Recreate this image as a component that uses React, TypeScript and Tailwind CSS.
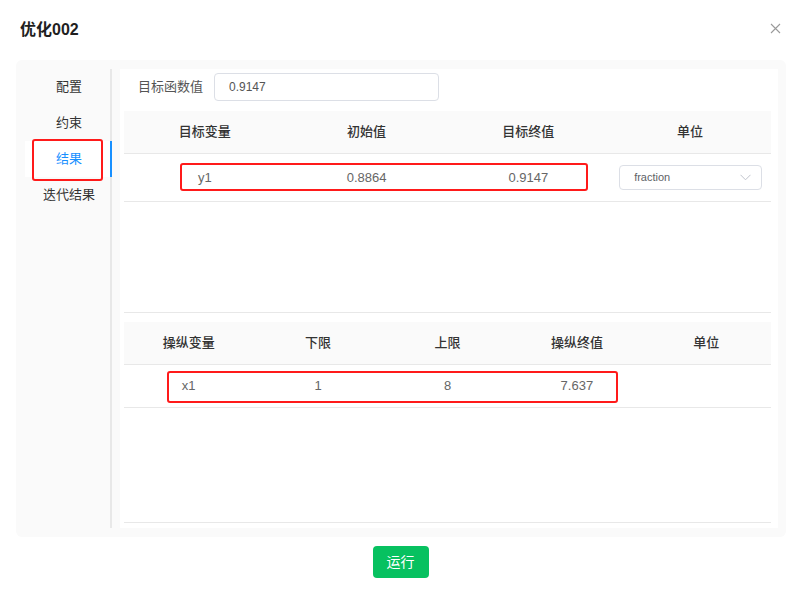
import { JSX } from "react";

const menuItems = ["配置", "约束", "结果", "迭代结果"];

const targetCols = ["目标变量", "初始值", "目标终值", "单位"];
const controlCols = ["操纵变量", "下限", "上限", "操纵终值", "单位"];

function CloseIcon(): JSX.Element {
    return (
        <svg width="11" height="11" viewBox="0 0 11 11" fill="none">
            <path d="M1 1L10 10M10 1L1 10" stroke="#9a9a9a" strokeWidth="1.1" />
        </svg>
    );
}

function Chevron(): JSX.Element {
    return (
        <svg width="11" height="7" viewBox="0 0 11 7" fill="none">
            <path d="M0.5 0.8L5.5 5.8L10.5 0.8" stroke="#c0c4cc" strokeWidth="1" />
        </svg>
    );
}

function UnitSelect(): JSX.Element {
    return (
        <div className="flex h-[25px] w-[143px] items-center justify-between rounded-[4px] border border-[#dcdfe6] bg-white pl-[14px] pr-[10px]">
            <span className="text-[11px] text-[#606266]">fraction</span>
            <Chevron />
        </div>
    );
}

export default function App(): JSX.Element {
    return (
        <div
            className="relative h-[593px] w-[801px] bg-white"
            style={{ fontFamily: '"Liberation Sans", "Noto Sans CJK SC", sans-serif' }}
        >
            {/* header */}
            <div className="flex h-[60px] items-center justify-between pl-[20px] pr-[20px]">
                <h1 className="text-[16px] font-bold text-[#1f1f1f]">优化002</h1>
                <span className="-mt-[4px]">
                    <CloseIcon />
                </span>
            </div>

            {/* panel */}
            <div className="ml-4 flex h-[477px] w-[770px] rounded-[6px] bg-[#fafafa] py-[9px] pr-[8px]">
                {/* side menu */}
                <div className="flex w-[96px] flex-col border-r-2 border-[#e8e8e8]">
                    {menuItems.map((item) => (
                        <div
                            key={item}
                            className={
                                item === "结果"
                                    ? "relative ml-[9px] flex h-[36px] items-center justify-center bg-white pl-[3px] text-[13px] text-[#1890ff]"
                                    : "ml-[9px] flex h-[36px] items-center justify-center pl-[3px] text-[13px] text-[#333]"
                            }
                        >
                            {item}
                            {item === "结果" && (
                                <span className="absolute -right-[2px] top-0 h-full w-[2px] bg-[#1890ff]" />
                            )}
                        </div>
                    ))}
                </div>

                {/* content */}
                <div className="ml-[8px] flex-1 bg-white pl-[4px] pr-[7px] pt-[4px]">
                    <div className="flex items-center">
                        <span className="ml-[14px] w-[76px] text-[13px] text-[#555]">目标函数值</span>
                        <div className="flex h-[28px] w-[225px] items-center rounded-[4px] border border-[#dcdfe6] px-[14px] text-[12px] text-[#555]">
                            0.9147
                        </div>
                    </div>

                    {/* target table */}
                    <div className="mt-[10px] h-[202px] border-b border-[#e8e8e8]">
                        <div className="grid h-[43px] grid-cols-4 items-center border-b border-[#e8e8e8] bg-[#fafafa] text-[13px] font-medium text-[#333]">
                            {targetCols.map((c) => (
                                <div key={c} className="text-center">
                                    {c}
                                </div>
                            ))}
                        </div>
                        <div className="grid h-[48px] grid-cols-4 items-center border-b border-[#e8e8e8] text-[13px] text-[#666]">
                            <div className="text-center">y1</div>
                            <div className="text-center">0.8864</div>
                            <div className="text-center">0.9147</div>
                            <div className="flex justify-center pl-[1px]">
                                <UnitSelect />
                            </div>
                        </div>
                    </div>

                    {/* control table */}
                    <div className="mt-[9px] h-[201px] border-b border-[#e8e8e8]">
                        <div className="grid h-[43px] grid-cols-5 items-center border-b border-[#e8e8e8] bg-[#fafafa] text-[13px] font-medium text-[#333]">
                            {controlCols.map((c, i) => (
                                <div key={i} className="text-center">
                                    {c}
                                </div>
                            ))}
                        </div>
                        <div className="grid h-[43px] grid-cols-5 items-center border-b border-[#e8e8e8] text-[13px] text-[#666]">
                            <div className="text-center">x1</div>
                            <div className="text-center">1</div>
                            <div className="text-center">8</div>
                            <div className="text-center">7.637</div>
                            <div />
                        </div>
                    </div>
                </div>
            </div>

            {/* footer */}
            <div className="mt-[9px] flex justify-center">
                <button className="h-[32px] w-[56px] rounded-[4px] bg-[#07c160] text-[14px] text-white">
                    运行
                </button>
            </div>

            {/* annotation boxes */}
            <div className="absolute left-[32px] top-[139px] h-[42px] w-[71px] rounded-[3px] border-2 border-[#ff1a1a]" />
            <div className="absolute left-[180px] top-[163px] h-[28px] w-[408px] rounded-[3px] border-2 border-[#ff1a1a]" />
            <div className="absolute left-[167px] top-[371px] h-[32px] w-[451px] rounded-[3px] border-2 border-[#ff1a1a]" />
        </div>
    );
}
